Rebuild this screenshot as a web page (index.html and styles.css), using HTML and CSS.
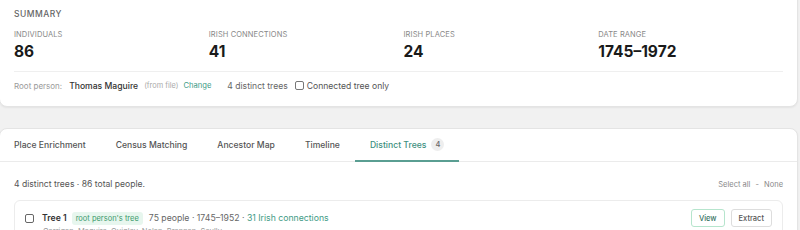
FILE: index.html
```html
<!DOCTYPE html>
<html>
<head>
<meta charset="utf-8">
<link rel="stylesheet" href="styles.css">
</head>
<body>
<section class="card summary">
  <div class="title">SUMMARY</div>
  <div class="stats">
    <div class="stat"><div class="label">INDIVIDUALS</div><div class="value">86</div></div>
    <div class="stat"><div class="label">IRISH CONNECTIONS</div><div class="value">41</div></div>
    <div class="stat"><div class="label">IRISH PLACES</div><div class="value">24</div></div>
    <div class="stat"><div class="label">DATE RANGE</div><div class="value">1745–1972</div></div>
  </div>
  <div class="root">
    <span class="muted">Root person:</span>
    <span class="name">Thomas Maguire</span>
    <span class="small">(from file)</span>
    <a class="link">Change</a>
    <span class="trees">4 distinct trees</span>
    <label class="check"><span class="box"></span>Connected tree only</label>
  </div>
</section>

<section class="card panel">
  <nav class="tabs">
    <div class="tab">Place Enrichment</div>
    <div class="tab">Census Matching</div>
    <div class="tab">Ancestor Map</div>
    <div class="tab">Timeline</div>
    <div class="tab active">Distinct Trees <span class="count">4</span></div>
  </nav>
  <div class="body">
    <div class="bar">
      <span>4 distinct trees · 86 total people.</span>
      <span class="select">Select all <span class="sep">-</span> None</span>
    </div>
    <div class="tree">
      <div class="tree-row">
        <span class="box"></span>
        <span class="tname">Tree 1</span>
        <span class="tag">root person's tree</span>
        <span class="meta">75 people · 1745–1952 · <span class="irish">31 Irish connections</span></span>
        <span class="actions"><button class="btn view">View</button><button class="btn">Extract</button></span>
      </div>
      <div class="surnames">Carrigan, Maguire, Quigley, Nolan, Brennan, Scully</div>
    </div>
  </div>
</section>
</body>
</html>
```
FILE: styles.css
```css
* { box-sizing: border-box; }
html, body { margin: 0; padding: 0; }
body {
  background: #f1f1f1;
  font-family: Inter, "Liberation Sans", sans-serif;
  color: #222;
  width: 800px;
  height: 230px;
  overflow: hidden;
}
.card {
  background: #fff;
  border: 1px solid #e4e4e4;
  border-radius: 8px;
  box-shadow: 0 1px 2px rgba(0,0,0,0.06);
  width: 799px;
  margin-left: -1px;
}
.summary {
  margin-top: -10px;
  padding: 15px 14px 0 14px;
  height: 117px;
}
.title {
  font-size: 8.5px;
  letter-spacing: 0.5px;
  color: #666;
  font-weight: 500;
  line-height: 16px;
}
.stats {
  display: grid;
  grid-template-columns: repeat(4, 1fr);
  column-gap: 10px;
  margin-top: 7px;
  padding-bottom: 9px;
  border-bottom: 1px solid #efefef;
}
.label {
  font-size: 7.5px;
  color: #888;
  line-height: 12px;
  letter-spacing: 0.1px;
}
.value {
  font-size: 15.5px;
  font-weight: 700;
  color: #1a1a1a;
  line-height: 20px;
  margin-top: 1px;
}
.root {
  display: flex;
  align-items: center;
  height: 27px;
  font-size: 8.6px;
  color: #555;
}
.root .muted { color: #9a9a9a; font-size: 8px; margin-right: 7px; }
.root .name { color: #333; font-weight: 500; margin-right: 6px; }
.root .small { color: #aaa; font-size: 7.4px; margin-right: 5px; }
.root .link { color: #3c9b86; font-size: 7.6px; margin-right: 16px; }
.root .trees { color: #666; margin-right: 7px; }
.check { display: flex; align-items: center; color: #555; }
.check .box { margin-right: 3px; }
.box {
  display: inline-block;
  width: 9px;
  height: 9px;
  border: 1px solid #777;
  border-radius: 2px;
  background: #fff;
}
.panel {
  margin-top: 21px;
  height: 140px;
}
.tabs {
  display: flex;
  height: 33px;
  border-bottom: 1px solid #ebebeb;
}
.tab {
  padding: 0 15px;
  display: flex;
  align-items: center;
  font-size: 8.6px;
  color: #555;
  font-weight: 500;
  border-bottom: 2px solid transparent;
  margin-bottom: -1px;
}
.tab:first-child { padding-left: 14px; }
.tab.active {
  color: #3d8f80;
  border-bottom-color: #5a9e92;
}
.count {
  display: inline-flex;
  align-items: center;
  justify-content: center;
  width: 13px;
  height: 13px;
  border-radius: 50%;
  background: #eeeeee;
  color: #666;
  font-size: 7.5px;
  margin-left: 5px;
}
.body { padding: 0 14px; }
.bar {
  display: flex;
  justify-content: space-between;
  align-items: center;
  height: 38px;
  padding-top: 6px;
  font-size: 8.6px;
  color: #555;
}
.select { color: #888; font-size: 7.5px; }
.sep { margin: 0 3px; }
.tree {
  border: 1px solid #ececec;
  border-radius: 6px;
  padding: 8px 10px 0 10px;
  height: 40px;
}
.tree-row {
  display: flex;
  align-items: center;
  font-size: 8.7px;
  height: 18px;
}
.tree-row .box { margin-right: 8px; border-color: #666; }
.tname { font-weight: 600; color: #333; margin-right: 5px; }
.tag {
  background: #e7f6ee;
  color: #3b9a6c;
  font-size: 7.5px;
  padding: 2px 4px;
  border-radius: 3px;
  margin-right: 6px;
}
.meta { color: #666; }
.irish { color: #3f9b85; }
.actions { margin-left: auto; display: flex; gap: 6px; }
.btn {
  font-family: inherit;
  font-size: 7.5px;
  height: 18px;
  padding: 0 7px;
  border: 1px solid #dddddd;
  border-radius: 3px;
  background: #fff;
  color: #555;
  font-weight: 500;
}
.btn.view { border-color: #b6e5cd; color: #3a7566; }
.surnames { font-size: 7.5px; color: #999; margin-top: 0; padding-left: 18px; }
```
